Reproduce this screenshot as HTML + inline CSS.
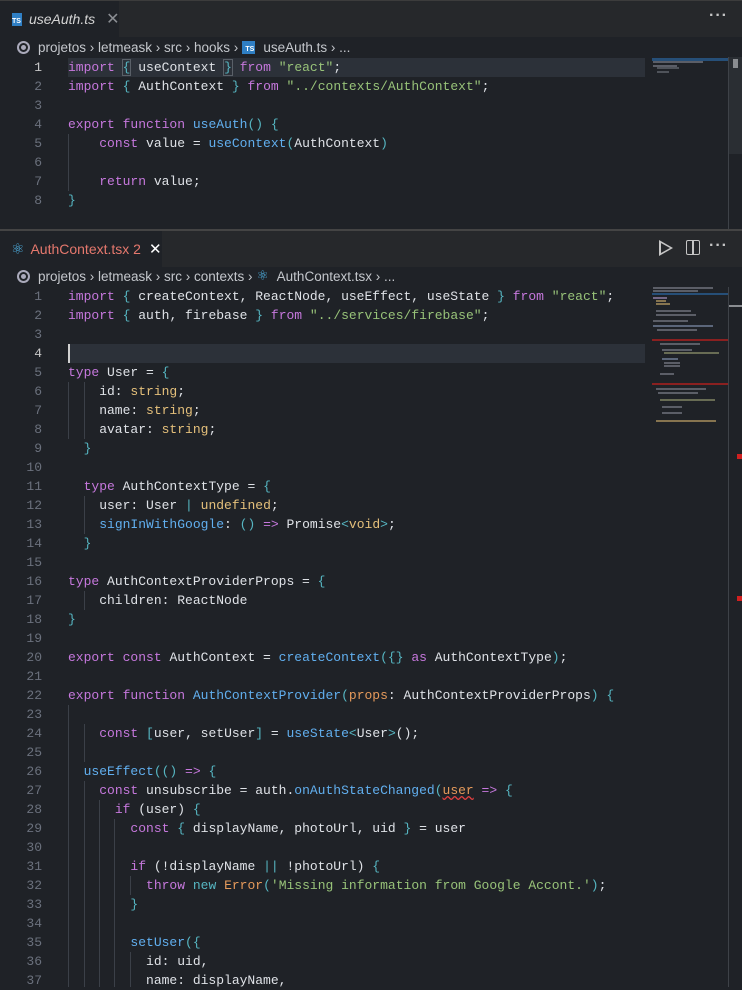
<!DOCTYPE html>
<html><head><meta charset="utf-8"><style>
*{margin:0;padding:0;box-sizing:border-box}
body{width:742px;height:987px;overflow:hidden;background:#1f2227;font-family:"Liberation Sans",sans-serif;position:relative;color:#d7dae0}
.tabbar{position:absolute;left:0;width:742px;height:36px;background:#26282b}
.tab{position:absolute;left:0;top:0;height:36px;background:#1f2227;font-size:14px;display:flex;align-items:center}
.bc{position:absolute;left:0;font-size:13.5px;color:#c4c7cc;display:flex;align-items:center;height:20px}
.ln{position:absolute;left:0;width:42px;text-align:right;font-family:"Liberation Mono",monospace;font-size:13px;color:#6b717d;height:19px;line-height:19px}
.c{position:absolute;left:68px;font-family:"Liberation Mono",monospace;font-size:13px;white-space:pre;height:19px;line-height:19px;color:#dfe2e7}
.k{color:#c678dd}.f{color:#61afef}.s{color:#98c379}.b{color:#56b6c2}.t{color:#e5c07b}.o{color:#e59a5b}.p{color:#abb2bf}
.g{position:absolute;width:1px;background:#3b4048}
.hl{position:absolute;left:68px;width:577px;height:19px;background:#2c3139}
.mm{position:absolute;height:2px;opacity:.8}
.dots{position:absolute;right:14px;top:6px;color:#c5c5c5;font-size:16px;font-weight:bold;letter-spacing:1px}
</style></head><body>
<!-- top panel -->
<div style="position:absolute;left:0;top:0;width:742px;height:1px;background:#3c3c3c"></div>
<div class="tabbar" style="top:1px">
 <div class="tab" style="width:119px">
  <span style="margin-left:12px;width:13px;height:13px;background:#2f7fc4;color:#fff;font-size:7px;font-weight:bold;display:flex;align-items:flex-end;justify-content:flex-end;padding:0 1px 1px 0">TS</span>
  <span style="margin-left:7px;font-style:italic;color:#d4d4d4">useAuth.ts</span>
  <span style="margin-left:11px;color:#8b8e93;font-size:16px">✕</span>
 </div>
 <div class="dots">···</div>
</div>
<div class="bc" style="top:37px">
 <span style="margin-left:17px;width:13px;height:13px;border:2px solid #aab;border-radius:50%;display:inline-flex;align-items:center;justify-content:center"><span style="width:5px;height:5px;background:#aab;border-radius:50%"></span></span>
 <span style="margin-left:8px">projetos › letmeask › src › hooks › </span>
 <span style="margin-left:4px;width:13px;height:13px;background:#2f7fc4;color:#fff;font-size:7px;font-weight:bold;display:inline-flex;align-items:flex-end;justify-content:flex-end;padding:0 1px 1px 0">TS</span>
 <span style="margin-left:8px">useAuth.ts › ...</span>
</div>
<div class="hl" style="top:58px"></div>
<div class="ln" style="top:58px;color:#c8c8c8">1</div><div class="c" style="top:58px"><span class="k">import</span> <span class="b" style="outline:1px solid #5a6068">{</span> useContext <span class="b" style="outline:1px solid #5a6068">}</span> <span class="k">from</span> <span class="s">"react"</span>;</div>
<div class="ln" style="top:77px">2</div><div class="c" style="top:77px"><span class="k">import</span> <span class="b">{</span> AuthContext <span class="b">}</span> <span class="k">from</span> <span class="s">"../contexts/AuthContext"</span>;</div>
<div class="ln" style="top:96px">3</div>
<div class="ln" style="top:115px">4</div><div class="c" style="top:115px"><span class="k">export</span> <span class="k">function</span> <span class="f">useAuth</span><span class="b">()</span> <span class="b">{</span></div>
<div class="ln" style="top:134px">5</div><div class="c" style="top:134px">    <span class="k">const</span> value = <span class="f">useContext</span><span class="b">(</span>AuthContext<span class="b">)</span></div>
<div class="ln" style="top:153px">6</div>
<div class="ln" style="top:172px">7</div><div class="c" style="top:172px">    <span class="k">return</span> value;</div>
<div class="ln" style="top:191px">8</div><div class="c" style="top:191px"><span class="b">}</span></div>
<div class="g" style="left:68px;top:134px;height:57px"></div>
<!-- top minimap/scroll -->
<div style="position:absolute;left:652px;top:58px;width:76px;height:3px;background:#264f78"></div>
<div class="mm" style="left:653px;top:61px;width:50px;background:#6a6e78"></div>
<div class="mm" style="left:653px;top:65px;width:24px;background:#6a6e78"></div>
<div class="mm" style="left:657px;top:67px;width:22px;background:#5b6068"></div>
<div class="mm" style="left:657px;top:71px;width:12px;background:#5b6068"></div>
<div style="position:absolute;left:728px;top:57px;width:1px;height:173px;background:#3e4248"></div>
<div style="position:absolute;left:729px;top:57px;width:13px;height:97px;background:#2a2e33"></div>
<div style="position:absolute;left:733px;top:59px;width:5px;height:9px;background:#8a8d91"></div>
<div style="position:absolute;left:0;top:229px;width:742px;height:2px;background:#444"></div>
<!-- bottom panel -->
<div class="tabbar" style="top:231px">
 <div class="tab" style="width:162px">
  <span style="margin-left:11px;color:#4fb3e6;font-size:15px">⚛</span>
  <span style="margin-left:6px;color:#e5786d">AuthContext.tsx 2</span>
  <span style="margin-left:8px;color:#fff;font-size:15px">✕</span>
 </div>
 <div style="position:absolute;left:659px;top:9px;width:0;height:0;border-left:14px solid #c5c5c5;border-top:8px solid transparent;border-bottom:8px solid transparent"></div>
 <div style="position:absolute;left:661px;top:11.5px;width:0;height:0;border-left:9px solid #26282b;border-top:5px solid transparent;border-bottom:5px solid transparent"></div>
 <div style="position:absolute;left:686px;top:9px;width:14px;height:15px;border:1.5px solid #c5c5c5;border-radius:2px"></div>
 <div style="position:absolute;left:692px;top:9px;width:1.5px;height:15px;background:#c5c5c5"></div>
 <div class="dots">···</div>
</div>
<div class="bc" style="top:266px">
 <span style="margin-left:17px;width:13px;height:13px;border:2px solid #aab;border-radius:50%;display:inline-flex;align-items:center;justify-content:center"><span style="width:5px;height:5px;background:#aab;border-radius:50%"></span></span>
 <span style="margin-left:8px">projetos › letmeask › src › contexts › </span>
 <span style="margin-left:4px;color:#4fb3e6">⚛</span>
 <span style="margin-left:8px">AuthContext.tsx › ...</span>
</div>
<div class="hl" style="top:344px"></div>
<div style="position:absolute;left:68px;top:344px;width:2px;height:19px;background:#d0d0d0"></div>

<div class="ln" style="top:287px">1</div><div class="c" style="top:287px"><span class="k">import</span> <span class="b">{</span> createContext, ReactNode, useEffect, useState <span class="b">}</span> <span class="k">from</span> <span class="s">"react"</span>;</div>
<div class="ln" style="top:306px">2</div><div class="c" style="top:306px"><span class="k">import</span> <span class="b">{</span> auth, firebase <span class="b">}</span> <span class="k">from</span> <span class="s">"../services/firebase"</span>;</div>
<div class="ln" style="top:325px">3</div>
<div class="ln" style="top:344px;color:#c8c8c8">4</div>
<div class="ln" style="top:363px">5</div><div class="c" style="top:363px"><span class="k">type</span> User = <span class="b">{</span></div>
<div class="ln" style="top:382px">6</div><div class="c" style="top:382px">    id: <span class="t">string</span>;</div>
<div class="ln" style="top:401px">7</div><div class="c" style="top:401px">    name: <span class="t">string</span>;</div>
<div class="ln" style="top:420px">8</div><div class="c" style="top:420px">    avatar: <span class="t">string</span>;</div>
<div class="ln" style="top:439px">9</div><div class="c" style="top:439px">  <span class="b">}</span></div>
<div class="ln" style="top:458px">10</div>
<div class="ln" style="top:477px">11</div><div class="c" style="top:477px">  <span class="k">type</span> AuthContextType = <span class="b">{</span></div>
<div class="ln" style="top:496px">12</div><div class="c" style="top:496px">    user: User <span class="b">|</span> <span class="t">undefined</span>;</div>
<div class="ln" style="top:515px">13</div><div class="c" style="top:515px">    <span class="f">signInWithGoogle</span>: <span class="b">()</span> <span class="k">=&gt;</span> Promise<span class="b">&lt;</span><span class="t">void</span><span class="b">&gt;</span>;</div>
<div class="ln" style="top:534px">14</div><div class="c" style="top:534px">  <span class="b">}</span></div>
<div class="ln" style="top:553px">15</div>
<div class="ln" style="top:572px">16</div><div class="c" style="top:572px"><span class="k">type</span> AuthContextProviderProps = <span class="b">{</span></div>
<div class="ln" style="top:591px">17</div><div class="c" style="top:591px">    children: ReactNode</div>
<div class="ln" style="top:610px">18</div><div class="c" style="top:610px"><span class="b">}</span></div>
<div class="ln" style="top:629px">19</div>
<div class="ln" style="top:648px">20</div><div class="c" style="top:648px"><span class="k">export</span> <span class="k">const</span> AuthContext = <span class="f">createContext</span><span class="b">({}</span> <span class="k">as</span> AuthContextType<span class="b">)</span>;</div>
<div class="ln" style="top:667px">21</div>
<div class="ln" style="top:686px">22</div><div class="c" style="top:686px"><span class="k">export</span> <span class="k">function</span> <span class="f">AuthContextProvider</span><span class="b">(</span><span class="o">props</span>: AuthContextProviderProps<span class="b">)</span> <span class="b">{</span></div>
<div class="ln" style="top:705px">23</div>
<div class="ln" style="top:724px">24</div><div class="c" style="top:724px">    <span class="k">const</span> <span class="b">[</span>user, setUser<span class="b">]</span> = <span class="f">useState</span><span class="b">&lt;</span>User<span class="b">&gt;</span>();</div>
<div class="ln" style="top:743px">25</div>
<div class="ln" style="top:762px">26</div><div class="c" style="top:762px">  <span class="f">useEffect</span><span class="b">(()</span> <span class="k">=&gt;</span> <span class="b">{</span></div>
<div class="ln" style="top:781px">27</div><div class="c" style="top:781px">    <span class="k">const</span> unsubscribe = auth.<span class="f">onAuthStateChanged</span><span class="b">(</span><span class="o" style="text-decoration:underline wavy #e04040">user</span> <span class="k">=&gt;</span> <span class="b">{</span></div>
<div class="ln" style="top:800px">28</div><div class="c" style="top:800px">      <span class="k">if</span> (user) <span class="b">{</span></div>
<div class="ln" style="top:819px">29</div><div class="c" style="top:819px">        <span class="k">const</span> <span class="b">{</span> displayName, photoUrl, uid <span class="b">}</span> = user</div>
<div class="ln" style="top:838px">30</div>
<div class="ln" style="top:857px">31</div><div class="c" style="top:857px">        <span class="k">if</span> (!displayName <span class="b">||</span> !photoUrl) <span class="b">{</span></div>
<div class="ln" style="top:876px">32</div><div class="c" style="top:876px">          <span class="k">throw</span> <span class="b">new</span> <span class="o">Error</span><span class="b">(</span><span class="s">'Missing information from Google Accont.'</span><span class="b">)</span>;</div>
<div class="ln" style="top:895px">33</div><div class="c" style="top:895px">        <span class="b">}</span></div>
<div class="ln" style="top:914px">34</div>
<div class="ln" style="top:933px">35</div><div class="c" style="top:933px">        <span class="f">setUser</span><span class="b">({</span></div>
<div class="ln" style="top:952px">36</div><div class="c" style="top:952px">          id: uid,</div>
<div class="ln" style="top:971px">37</div><div class="c" style="top:971px">          name: displayName,</div>

<!-- guides -->
<div class="g" style="left:68px;top:382px;height:57px"></div>
<div class="g" style="left:84px;top:382px;height:57px"></div>
<div class="g" style="left:84px;top:496px;height:38px"></div>
<div class="g" style="left:84px;top:591px;height:19px"></div>
<div class="g" style="left:68px;top:705px;height:282px"></div>
<div class="g" style="left:84px;top:724px;height:38px"></div>
<div class="g" style="left:84px;top:781px;height:206px"></div>
<div class="g" style="left:99px;top:800px;height:187px"></div>
<div class="g" style="left:114px;top:819px;height:168px"></div>
<div class="g" style="left:130px;top:876px;height:19px"></div>
<div class="g" style="left:130px;top:952px;height:35px"></div>

<!-- minimap bottom -->
<div class="mm" style="left:653px;top:287px;width:60px;background:#6a6e78"></div>
<div class="mm" style="left:653px;top:290px;width:45px;background:#6a6e78"></div>
<div style="position:absolute;left:652px;top:293px;width:76px;height:2px;background:#264f78"></div>
<div class="mm" style="left:653px;top:297px;width:14px;background:#8a7aa0"></div>
<div class="mm" style="left:656px;top:300px;width:10px;background:#a08a5a"></div>
<div class="mm" style="left:656px;top:303px;width:14px;background:#a08a5a"></div>
<div class="mm" style="left:656px;top:310px;width:35px;background:#6a6e78"></div>
<div class="mm" style="left:656px;top:314px;width:40px;background:#6a6e78"></div>
<div class="mm" style="left:653px;top:320px;width:35px;background:#6a6e78"></div>
<div class="mm" style="left:653px;top:325px;width:60px;background:#6a7890"></div>
<div class="mm" style="left:657px;top:329px;width:40px;background:#6a6e78"></div>
<div style="position:absolute;left:652px;top:339px;width:76px;height:2px;background:#8a2020"></div>
<div class="mm" style="left:660px;top:343px;width:40px;background:#6a6e78"></div>
<div class="mm" style="left:662px;top:349px;width:30px;background:#6a6e78"></div>
<div class="mm" style="left:664px;top:352px;width:55px;background:#7a8060"></div>
<div class="mm" style="left:662px;top:358px;width:16px;background:#6a7890"></div>
<div class="mm" style="left:664px;top:362px;width:16px;background:#6a6e78"></div>
<div class="mm" style="left:664px;top:365px;width:16px;background:#6a6e78"></div>
<div class="mm" style="left:660px;top:373px;width:14px;background:#6a6e78"></div>
<div style="position:absolute;left:652px;top:383px;width:76px;height:2px;background:#8a2020"></div>
<div class="mm" style="left:656px;top:388px;width:50px;background:#6a6e78"></div>
<div class="mm" style="left:658px;top:392px;width:40px;background:#6a6e78"></div>
<div class="mm" style="left:660px;top:399px;width:55px;background:#7a8060"></div>
<div class="mm" style="left:662px;top:406px;width:20px;background:#6a6e78"></div>
<div class="mm" style="left:662px;top:412px;width:20px;background:#6a6e78"></div>
<div class="mm" style="left:656px;top:420px;width:60px;background:#a08a5a"></div>
<div style="position:absolute;left:728px;top:287px;width:1px;height:700px;background:#3e4248"></div>
<div style="position:absolute;left:729px;top:305px;width:13px;height:2px;background:#8a8d91"></div>
<div style="position:absolute;left:737px;top:454px;width:5px;height:5px;background:#d02020"></div>
<div style="position:absolute;left:737px;top:596px;width:5px;height:5px;background:#d02020"></div>
</body></html>
